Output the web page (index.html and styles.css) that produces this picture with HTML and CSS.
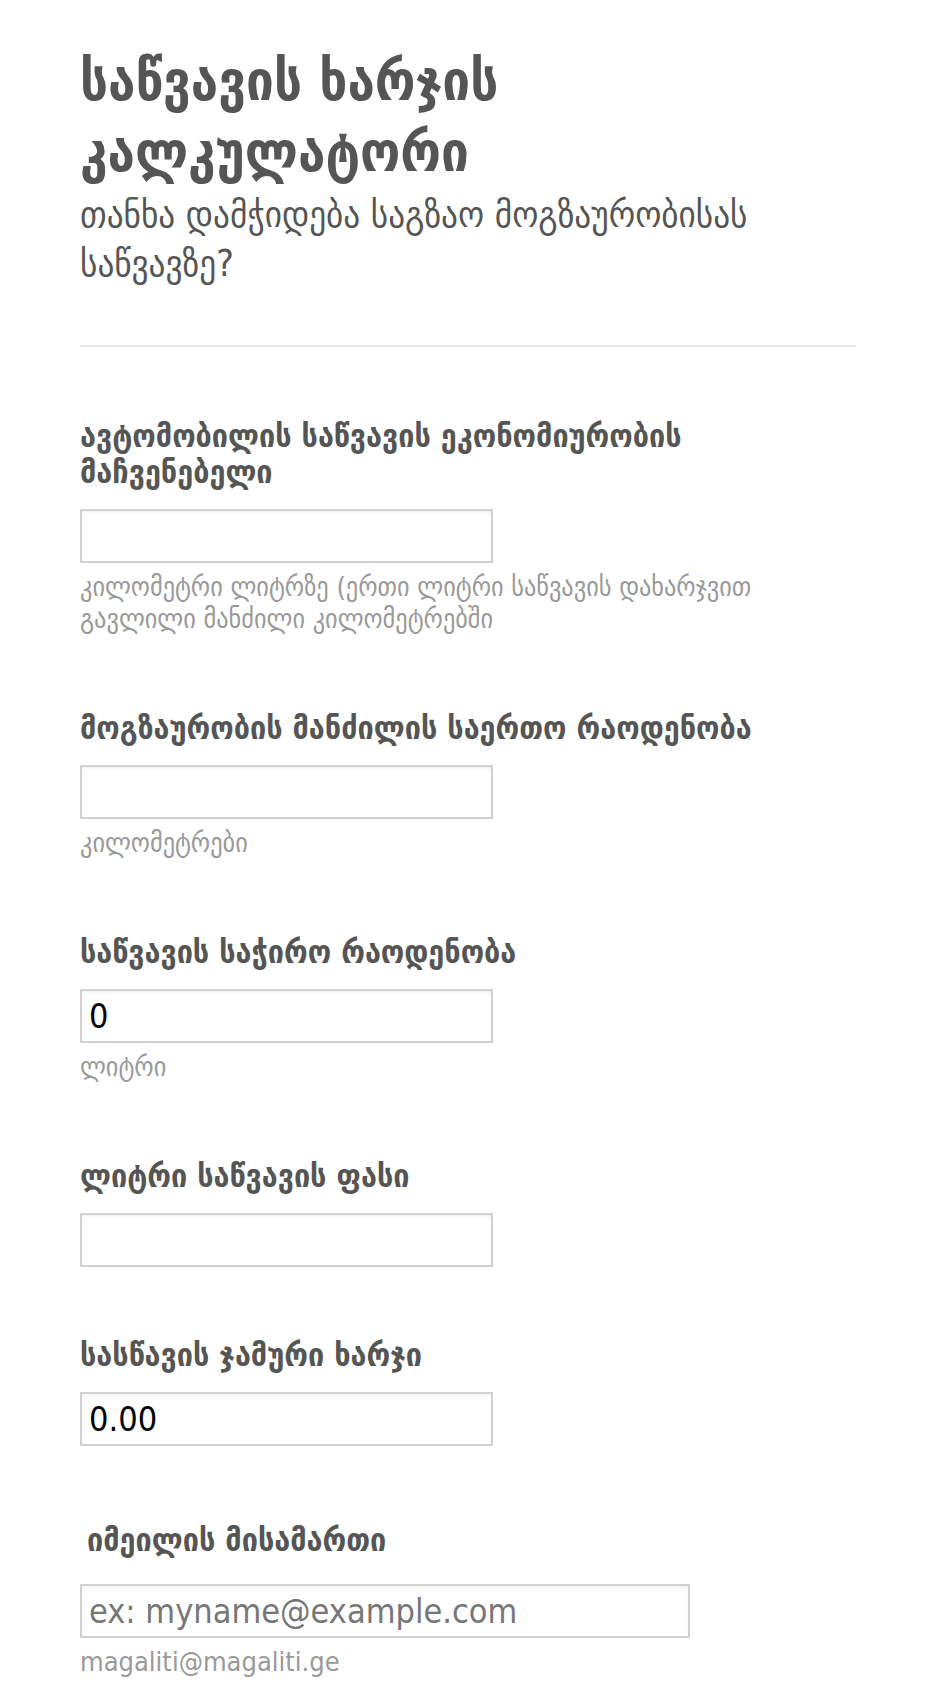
FILE: index.html
```html
<!DOCTYPE html>
<html lang="ka">

<head>
    <meta charset="UTF-8">
    <meta name="viewport" content="width=device-width, initial-scale=1.0">
    <title>საწვავის ხარჯის კალკულატორი</title>
    <link rel="stylesheet" href="styles.css">
</head>

<body>
    <form class="form-all" id="fuelForm">
        <div class="form-header">
            <h1 class="form-title">საწვავის ხარჯის კალკულატორი</h1>
            <div class="form-subtitle">თანხა დამჭიდება საგზაო მოგზაურობისას საწვავზე?</div>
        </div>

        <div class="form-line">
            <label class="form-label" for="economy">ავტომობილის საწვავის ეკონომიურობის მაჩვენებელი</label>
            <input class="form-input" type="text" id="economy">
            <div class="form-sub">კილომეტრი ლიტრზე (ერთი ლიტრი საწვავის დახარჯვით გავლილი მანძილი კილომეტრებში</div>
        </div>

        <div class="form-line">
            <label class="form-label" for="distance">მოგზაურობის მანძილის საერთო რაოდენობა</label>
            <input class="form-input" type="text" id="distance">
            <div class="form-sub">კილომეტრები</div>
        </div>

        <div class="form-line">
            <label class="form-label" for="liters">საწვავის საჭირო რაოდენობა</label>
            <input class="form-input" type="text" id="liters" value="0" readonly>
            <div class="form-sub">ლიტრი</div>
        </div>

        <div class="form-line">
            <label class="form-label" for="price">ლიტრი საწვავის ფასი</label>
            <input class="form-input" type="text" id="price">
        </div>

        <div class="form-line">
            <label class="form-label" for="total">სასწავის ჯამური ხარჯი</label>
            <input class="form-input" type="text" id="total" value="0.00" readonly>
        </div>

        <div class="form-line form-line-email">
            <label class="form-label label-indent" for="email">იმეილის მისამართი</label>
            <input class="form-input input-wide" type="email" id="email" placeholder="ex: myname@example.com">
            <div class="form-sub">magaliti@magaliti.ge</div>
        </div>
    </form>
    <script>
        // ლიტრები = მანძილი / ეკონომიურობა, ხარჯი = ლიტრები * ფასი
        function calc() {
            var economy = parseFloat(document.getElementById('economy').value) || 0;
            var distance = parseFloat(document.getElementById('distance').value) || 0;
            var price = parseFloat(document.getElementById('price').value) || 0;
            var liters = economy > 0 ? distance / economy : 0;
            document.getElementById('liters').value = Math.round(liters * 100) / 100;
            document.getElementById('total').value = (liters * price).toFixed(2);
        }
        ['economy', 'distance', 'price'].forEach(function (id) {
            document.getElementById(id).addEventListener('input', calc);
        });
    </script>
</body>

</html>
```

FILE: styles.css
```css
body {
    margin: 0;
    background: #fff;
    font-family: 'DejaVu Sans Condensed', 'DejaVu Sans', sans-serif;
    font-stretch: condensed;
    color: #555;
}

.form-all {
    width: 776px;
    margin-left: 80px;
    padding-top: 46px;
    padding-bottom: 30px;
}

.form-header {
    padding-bottom: 57px;
    border-bottom: 2px solid #e6e6e6;
    margin-bottom: 71px;
}

.form-title {
    margin: 0;
    font-size: 55px;
    line-height: 71px;
    font-weight: bold;
    color: #555;
    width: 520px;
}

.form-subtitle {
    margin-top: 2px;
    font-size: 37px;
    line-height: 49px;
    color: #555;
    width: 740px;
}

.form-line {
    margin-bottom: 70px;
}

.form-line-email {
    padding-top: 6px;
}

.form-label {
    display: block;
    width: 680px;
    font-size: 32px;
    line-height: 36px;
    font-weight: bold;
    color: #555;
    margin-bottom: 19px;
}

.label-indent {
    padding-left: 7px;
    margin-bottom: 26px;
}

.form-input {
    display: block;
    width: 413px;
    height: 54px;
    padding: 4px 7px;
    border: 2px solid #d0d0d0;
    box-shadow: inset 0 2px 2px rgba(0, 0, 0, 0.05);
    box-sizing: border-box;
    font-family: inherit;
    font-stretch: condensed;
    font-size: 34px;
    color: #000;
    outline: none;
}

.form-input::placeholder {
    color: #777;
}

.input-wide {
    width: 610px;
}

.form-sub {
    margin-top: 8px;
    padding-bottom: 5px;
    font-size: 27px;
    line-height: 32px;
    color: #999;
    width: 700px;
}
```
